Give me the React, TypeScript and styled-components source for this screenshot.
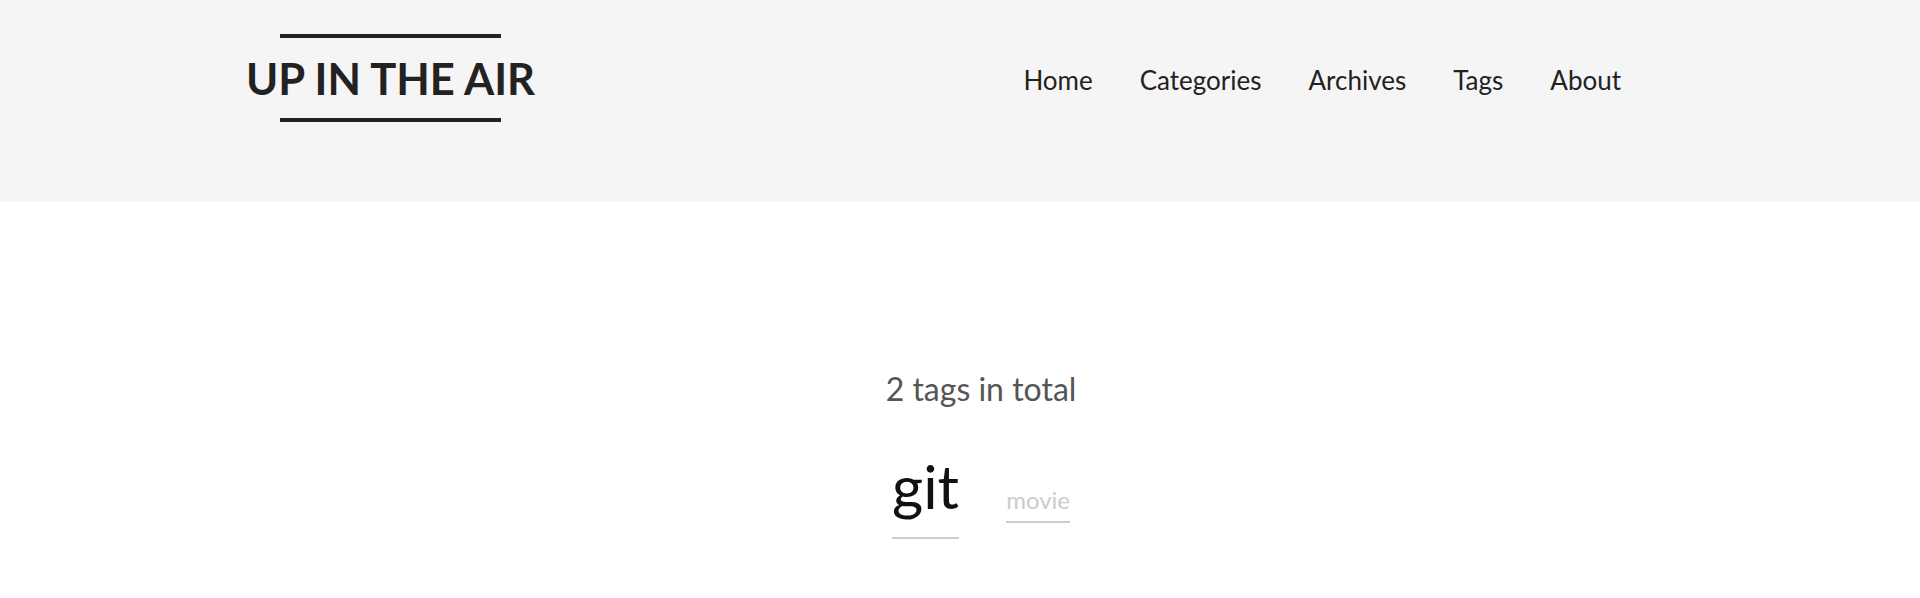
import styled, { createGlobalStyle } from "styled-components";

const GlobalStyle = createGlobalStyle`
  html, body {
    margin: 0;
    padding: 0;
    background: #fff;
    font-family: Lato, "Noto Sans", sans-serif;
  }
`;

const Header = styled.header`
  height: 202px;
  background: #f5f5f5;
  box-sizing: border-box;
  display: flex;
  align-items: flex-start;
  justify-content: space-between;
  padding: 34px 299px 0 246px;
`;

const Brand = styled.a`
  display: flex;
  flex-direction: column;
  align-items: center;
  color: #222;
  text-decoration: none;
`;

const BrandLine = styled.span`
  display: block;
  width: 221px;
  height: 4px;
  background: #222;
`;

const BrandTitle = styled.span`
  font-size: 43.5px;
  font-weight: 700;
  line-height: 80px;
  white-space: nowrap;
`;

const Nav = styled.nav`
  display: flex;
  gap: 47px;
  padding-top: 26px;
`;

const NavLink = styled.a`
  font-size: 26px;
  line-height: 40px;
  color: #222;
  text-decoration: none;
`;

const Main = styled.main`
  display: flex;
  flex-direction: column;
  align-items: center;
  padding: 165px 0 0 42px;
`;

const Total = styled.h2`
  margin: 0;
  font-size: 32px;
  font-weight: 400;
  line-height: 44px;
  color: #555;
`;

const Cloud = styled.div`
  display: flex;
  align-items: baseline;
  gap: 47px;
  margin-top: 24px;
`;

const Tag = styled.a<{ $size: number; $color: string }>`
  font-size: ${(p) => p.$size}px;
  color: ${(p) => p.$color};
  text-decoration: none;
  line-height: 1.7;
  border-bottom: 2px solid #ccc;
`;

const tags = [
  { name: "git", size: 60, color: "#111" },
  { name: "movie", size: 24, color: "#ccc" },
];

const links = ["Home", "Categories", "Archives", "Tags", "About"];

const App = () => (
  <>
    <GlobalStyle />
    <Header>
      <Brand href="#">
        <BrandLine />
        <BrandTitle>UP IN THE AIR</BrandTitle>
        <BrandLine />
      </Brand>
      <Nav>
        {links.map((l) => (
          <NavLink key={l} href="#">
            {l}
          </NavLink>
        ))}
      </Nav>
    </Header>
    <Main>
      <Total>2 tags in total</Total>
      <Cloud>
        {tags.map((t) => (
          <Tag key={t.name} href="#" $size={t.size} $color={t.color}>
            {t.name}
          </Tag>
        ))}
      </Cloud>
    </Main>
  </>
);

export default App;
